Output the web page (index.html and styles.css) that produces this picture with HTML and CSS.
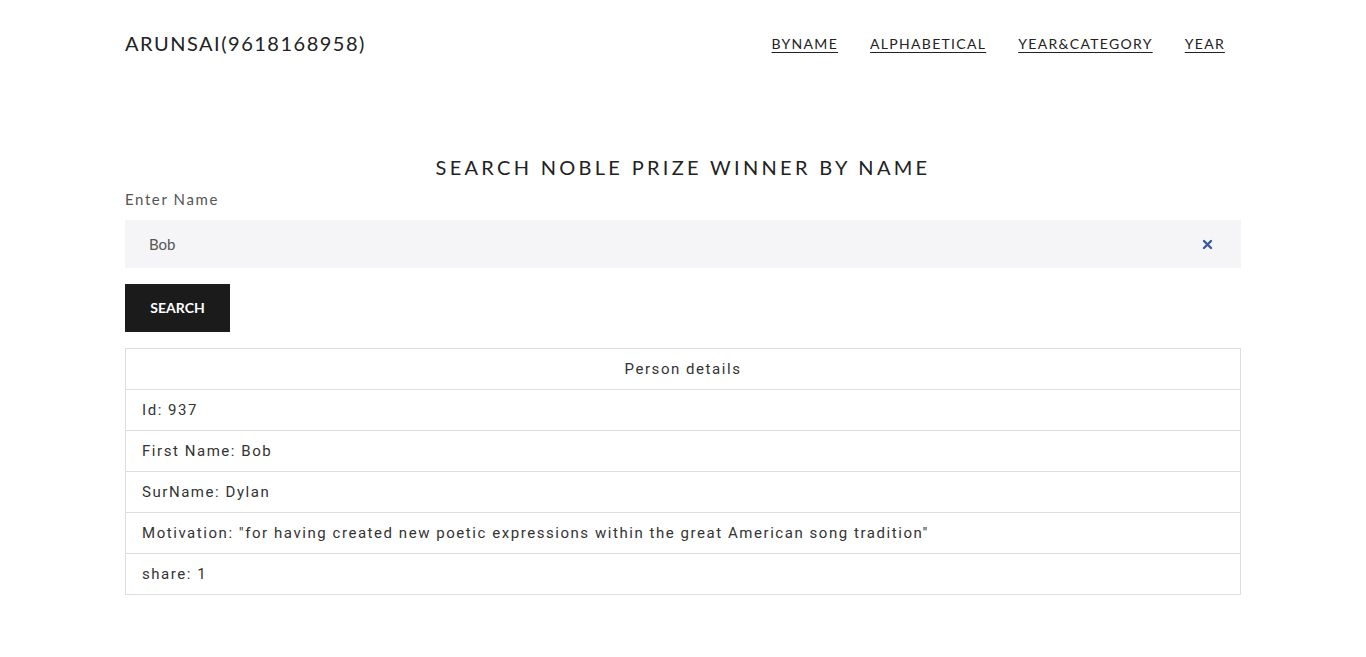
FILE: index.html
```html
<!DOCTYPE html>
<html>
<head>
<meta charset="utf-8">
<link rel="stylesheet" href="styles.css">
</head>
<body>
<div class="wrap">
  <header class="top">
    <div class="brand">ARUNSAI(9618168958)</div>
    <nav class="nav">
      <a href="#">BYNAME</a>
      <a href="#">ALPHABETICAL</a>
      <a href="#">YEAR&amp;CATEGORY</a>
      <a href="#">YEAR</a>
    </nav>
  </header>
  <main class="main">
    <h1 class="title">SEARCH NOBLE PRIZE WINNER BY NAME</h1>
    <label class="label">Enter Name</label>
    <div class="field">
      <span class="value">Bob</span>
      <svg class="clear" width="11" height="11" viewBox="0 0 11 11"><path d="M2 2L9 9M9 2L2 9" stroke="#3a5a98" stroke-width="2.4" stroke-linecap="round"/></svg>
    </div>
    <button class="btn">SEARCH</button>
    <div class="table">
      <div class="row head">Person details</div>
      <div class="row">Id: 937</div>
      <div class="row">First Name: Bob</div>
      <div class="row">SurName: Dylan</div>
      <div class="row">Motivation: "for having created new poetic expressions within the great American song tradition"</div>
      <div class="row">share: 1</div>
    </div>
  </main>
</div>
</body>
</html>
```
FILE: styles.css
```css
html, body { margin: 0; padding: 0; background: #fff; }
body { font-family: "Lato", "Open Sans", sans-serif; color: #222; }
.wrap { width: 1116px; margin: 0 auto; }
.top { display: flex; justify-content: space-between; align-items: center; height: 86px; }
.brand { font-size: 20px; letter-spacing: 1.5px; color: #222; }
.nav { display: flex; gap: 32px; padding-right: 16px; }
.nav a { font-size: 14px; letter-spacing: 1.3px; color: #222; text-decoration: underline; text-underline-offset: 3px; }
.main { padding-top: 68px; display: flex; flex-direction: column; }
.title { margin: 0; text-align: center; font-weight: 400; font-size: 20px; letter-spacing: 3.3px; color: #222; line-height: 26px; }
.label { margin-top: 9px; font-size: 15px; letter-spacing: 1.6px; color: #555; line-height: 20px; }
.field { margin-top: 11px; height: 48px; background: #f5f5f7; display: flex; align-items: center; justify-content: space-between; padding: 0 28px 0 24px; }
.value { font-size: 15px; color: #555; }
.btn { margin-top: 16px; width: 105px; height: 48px; padding: 0 0 2px; background: #1b1b1b; color: #fff; border: 0; font-family: "Lato", sans-serif; font-weight: 700; font-size: 14px; cursor: pointer; }
.table { margin-top: 16px; border: 1px solid #ddd; font-family: "Roboto", sans-serif; }
.row { height: 40px; line-height: 40px; padding: 0 16px; font-size: 15px; letter-spacing: 1.55px; color: #333; border-top: 1px solid #ddd; }
.row.head { border-top: 0; text-align: center; }
```
